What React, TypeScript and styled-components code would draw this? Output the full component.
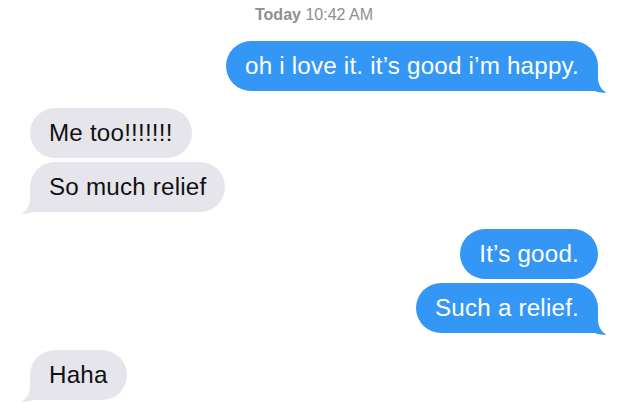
import React from "react";
import styled, { createGlobalStyle, css } from "styled-components";

const Global = createGlobalStyle`
  html, body { margin: 0; padding: 0; background: #ffffff; }
  body { font-family: "Liberation Sans", Arial, sans-serif; }
`;

const Screen = styled.div`
  width: 630px;
  height: 413px;
  overflow: hidden;
  background: #ffffff;
  display: flex;
  flex-direction: column;
  padding: 5px 32px 0 30px;
  box-sizing: border-box;
`;

const Stamp = styled.div`
  text-align: center;
  font-size: 16px;
  line-height: 20px;
  color: #8e8e93;
  margin-bottom: 16px;
  b { font-weight: 700; }
`;

const Group = styled.div<{ $side: "in" | "out" }>`
  display: flex;
  flex-direction: column;
  align-items: ${(p) => (p.$side === "out" ? "flex-end" : "flex-start")};
  gap: 4px;
  & + & { margin-top: 17px; }
`;

const Bubble = styled.div<{ $side: "in" | "out"; $tail?: boolean }>`
  position: relative;
  font-size: 24.2px;
  line-height: 28px;
  letter-spacing: 0.2px;
  padding: 11px 19px;
  border-radius: 25px;
  white-space: nowrap;
  ${(p) =>
    p.$side === "out"
      ? css`
          background: #3497f6;
          color: #ffffff;
        `
      : css`
          background: #e6e5eb;
          color: #111111;
        `}
  ${(p) =>
    p.$tail &&
    (p.$side === "out"
      ? css`border-bottom-right-radius: 4px;`
      : css`border-bottom-left-radius: 4px;`)}
`;

const Tail = styled.svg<{ $side: "in" | "out" }>`
  position: absolute;
  bottom: -2px;
  width: 20px;
  height: 22px;
  ${(p) =>
    p.$side === "out"
      ? css`right: -9px;`
      : css`left: -9px; transform: scaleX(-1);`}
`;

function Msg({
  side,
  tail,
  children,
}: {
  side: "in" | "out";
  tail?: boolean;
  children: React.ReactNode;
}) {
  const fill = side === "out" ? "#3497f6" : "#e6e5eb";
  return (
    <Bubble $side={side} $tail={tail}>
      {children}
      {tail && (
        <Tail $side={side} viewBox="0 0 20 22" aria-hidden>
          <path
            d="M0 0 H11 V6 C11 13 13.5 18 19.5 21.6 C14.5 22.3 9 21.2 5.5 18.6 L0 20 Z"
            fill={fill}
          />
        </Tail>
      )}
    </Bubble>
  );
}

export default function App() {
  return (
    <>
      <Global />
      <Screen>
        <Stamp>
          <b>Today</b> 10:42 AM
        </Stamp>
        <Group $side="out">
          <Msg side="out" tail>
            oh i love it. it’s good i’m happy.
          </Msg>
        </Group>
        <Group $side="in">
          <Msg side="in">Me too!!!!!!!</Msg>
          <Msg side="in" tail>
            So much relief
          </Msg>
        </Group>
        <Group $side="out">
          <Msg side="out">It’s good.</Msg>
          <Msg side="out" tail>
            Such a relief.
          </Msg>
        </Group>
        <Group $side="in">
          <Msg side="in" tail>
            Haha
          </Msg>
        </Group>
      </Screen>
    </>
  );
}
